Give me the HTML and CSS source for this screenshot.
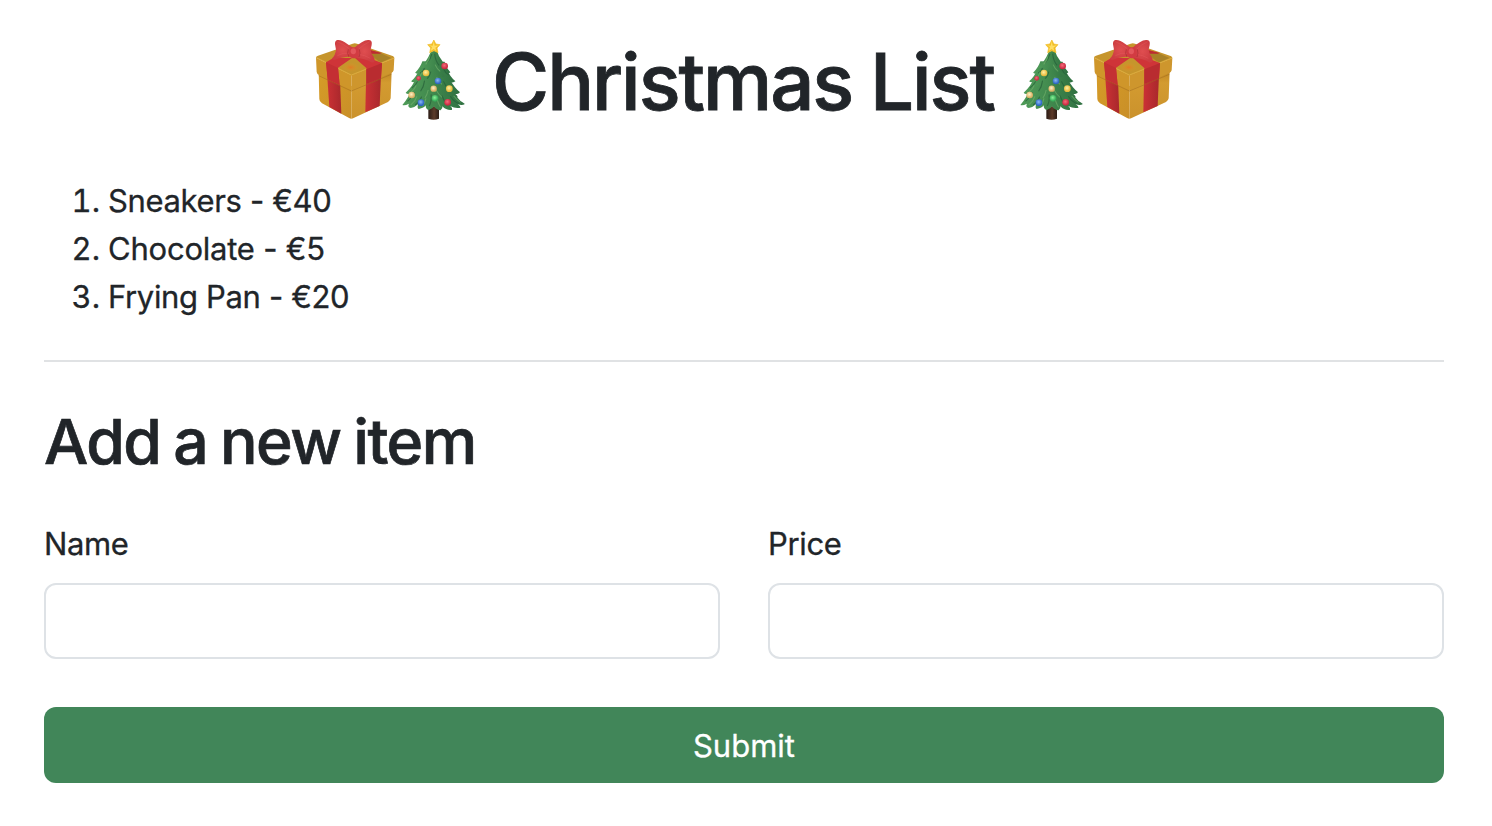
FILE: index.html
```html
<!DOCTYPE html>
<html lang="en">
<head>
<meta charset="utf-8">
<title>Christmas List</title>
<link rel="stylesheet" href="styles.css">
</head>
<body>
<svg class="defs" aria-hidden="true">
  <defs>
    <linearGradient id="gold-left" x1="0" y1="0" x2="1" y2="1"><stop offset="0" stop-color="#d69c27"/><stop offset="1" stop-color="#c98f28"/></linearGradient>
    <linearGradient id="gold-right" x1="0" y1="0" x2="0" y2="1"><stop offset="0" stop-color="#c08622"/><stop offset=".25" stop-color="#d39b30"/><stop offset="1" stop-color="#cb922c"/></linearGradient>
    <linearGradient id="ribbon" x1="0" y1="0" x2="1" y2="0"><stop offset="0" stop-color="#cb3135"/><stop offset="1" stop-color="#a9282c"/></linearGradient>
    <radialGradient id="bow"><stop offset="0" stop-color="#df4e50"/><stop offset="1" stop-color="#cd3d41"/></radialGradient>
    <radialGradient id="glow"><stop offset="0" stop-color="#e87522" stop-opacity=".8"/><stop offset="1" stop-color="#d99b29" stop-opacity="0"/></radialGradient>
    <linearGradient id="needles" x1="0" y1="0" x2="1" y2="0"><stop offset="0" stop-color="#4f9b58"/><stop offset=".5" stop-color="#40884d"/><stop offset="1" stop-color="#2f7041"/></linearGradient>
    <linearGradient id="trunk"><stop offset="0" stop-color="#2b1b15"/><stop offset=".55" stop-color="#5d3a29"/><stop offset="1" stop-color="#2d1c15"/></linearGradient>
    <radialGradient id="ball-red" cx=".45" cy=".4"><stop offset="0" stop-color="#f46b7a"/><stop offset="1" stop-color="#cb2b42"/></radialGradient>
    <radialGradient id="ball-blue" cx=".45" cy=".4"><stop offset="0" stop-color="#8db8f5"/><stop offset="1" stop-color="#2d67c3"/></radialGradient>
    <radialGradient id="ball-gold" cx=".45" cy=".4"><stop offset="0" stop-color="#fff1a4"/><stop offset="1" stop-color="#e9bb3d"/></radialGradient>
    <radialGradient id="ball-cream" cx=".45" cy=".4"><stop offset="0" stop-color="#fff2c5"/><stop offset="1" stop-color="#d9b064"/></radialGradient>
    <radialGradient id="ball-green" cx=".45" cy=".4"><stop offset="0" stop-color="#8df19a"/><stop offset="1" stop-color="#37ac58"/></radialGradient>
  </defs>
  <symbol id="gift" viewBox="0 0 270 270">
    <path d="M26 108 L124 153 L124 251 Q121 251 116 248 L36 205 Q28 200 28 192Z" fill="url(#gold-left)"/>
    <path d="M124 153 L245 108 L242 190 Q241 197 234 201 L131 249 Q127 251 124 251Z" fill="url(#gold-right)"/>
    <path d="M51 113 L90 134 L94 236 L58 216Z" fill="url(#ribbon)"/>
    <path d="M168 137 L213 119 L209 213 L166 232Z" fill="url(#ribbon)"/>
    <path d="M18 68 Q18 64 24 62 L128 26 Q134 24 141 26 L248 63 Q254 65 253 70 L124 122Z" fill="#c6952c"/>
    <path d="M18 68 L124 121 L124 166 L28 121 Q21 118 20 111Z" fill="#cf962a"/>
    <path d="M124 121 L253 69 L251 106 Q250 112 242 115 L124 166Z" fill="#ce962d"/>
    <path d="M20 68 L124 120 L252 69" fill="none" stroke="#deb040" stroke-width="2.500"/>
    <path d="M26 122 L124 168 L244 118" fill="none" stroke="#a0691d" stroke-width="3" opacity=".5"/>
    <path d="M48 82 L70 69 L126 69 L84 98 L89 150 L53 133Z" fill="#cf3438"/>
    <path d="M48 82 L84 99 L89 150 L53 133Z" fill="#c42f33"/>
    <path d="M134 68 L169 99 L169 147 L213 129 L216 84 L158 62Z" fill="#cf3438"/>
    <path d="M169 103 L216 84 L213 129 L169 147Z" fill="#b92c30"/>
    <path d="M178 44 L216 54 L188 67Z" fill="#bd2b32"/>
    <path d="M182 56 Q196 74 214 82 L244 69 L216 56Z" fill="#a88127"/>
    <ellipse cx="122" cy="97" rx="24" ry="14" fill="url(#glow)"/>
    <path d="M82 15 Q94 13 112 27 L130 39 L129 64 Q105 65 87 70 Q66 79 66 70 Q76 61 78 44 L75 28 Q74 17 82 15Z" fill="url(#bow)"/>
    <path d="M133 39 Q157 16 174 15 Q188 14 185 30 L182 43 Q184 60 193 69 Q197 84 184 82 Q164 70 139 69Z" fill="url(#bow)"/>
    <path d="M82 20 Q98 25 119 42 M82 62 Q99 52 118 55 M179 20 Q159 29 147 42 M181 70 Q163 60 147 58" fill="none" stroke="#eb6267" stroke-width="3" opacity=".3"/>
    <path d="M115 43q-5 12 2 23 M148 43q4 12-1 23" fill="none" stroke="#a7292f" stroke-width="3" opacity=".6"/>
    <rect x="117" y="37" width="29" height="33" rx="13" fill="#d23b42"/>
    <ellipse cx="130" cy="49" rx="8" ry="9" fill="#e3565b"/>
  </symbol>
  <symbol id="tree" viewBox="0 0 240 270">
    <path d="M100 214h32v37q-16 6-32 0Z" fill="url(#trunk)"/>
    <g transform="translate(-10.500 0) scale(1.09 1)">
      <path d="M55 164 Q49 184 30 210 Q36 213 48 206 Q43 216 53 219 Q65 217 73 208 Q70 220 75 222 Q90 219 94 211 Q94 224 103 225 Q114 221 117 214 Q123 225 135 226 Q142 220 140 214 Q151 227 166 225 Q169 219 161 213 Q177 222 190 218 Q190 213 182 208 Q195 212 202 207 Q197 203 190 198 Q178 186 171 169Z" fill="url(#needles)"/>
      <path d="M67 130 Q59 154 39 173 Q43 180 56 175 Q50 188 58 190 Q72 185 78 177 Q75 193 86 196 Q98 191 101 180 Q105 195 116 196 Q124 190 123 180 Q136 197 151 194 Q156 189 148 181 Q165 192 181 188 Q184 183 175 177 Q187 177 188 171 Q174 160 160 133Z" fill="url(#needles)"/>
      <path d="M76 103 Q70 124 54 139 Q60 145 72 139 Q69 153 77 154 Q89 148 91 142 Q92 157 101 158 Q110 151 109 146 Q120 161 133 159 Q137 153 132 146 Q147 157 164 153 Q166 147 158 142 Q168 145 176 139 Q160 124 154 105Z" fill="url(#needles)"/>
      <path d="M85 79 Q79 99 65 113 Q72 120 84 112 Q81 125 91 126 Q102 119 102 113 Q105 130 118 128 Q122 121 119 114 Q132 131 146 125 Q147 119 138 112 Q156 119 162 112 Q151 99 146 80Z" fill="url(#needles)"/>
      <path d="M108 51 Q97 80 79 97 Q85 103 94 97 Q94 106 102 104 Q109 100 110 94 Q116 108 126 106 Q129 99 125 94 Q139 105 153 99 Q142 83 138 75 Q129 62 126 50 Q117 46 108 51Z" fill="url(#needles)"/>
      <path d="M111 57q-3 16-13 27 M119 56q1 20 12 35 M91 99q-3 11-12 15 M108 110q-3 15-10 21 M144 103q5 12 14 17 M72 139q-5 11-16 20 M91 137q-2 19-11 32 M143 139q6 17 18 28 M64 172q-6 15-20 27 M83 185q-5 15-18 25 M109 178q2 20-5 35 M139 182q5 18 16 30 M162 184q8 16 24 22" fill="none" stroke="#235b37" stroke-width="3" opacity=".65"/>
      <path d="M105 65q-2 13-11 23 M84 111q-3 15-14 25 M120 89q5 13 14 20 M124 126q6 14 15 22 M68 151q-4 12-14 20 M101 165q-3 15-9 24 M122 164q8 15 17 23 M70 184q-5 16-17 26 M95 190q-3 14-10 24 M126 195q4 13 9 22 M171 182q9 13 19 20" fill="none" stroke="#71b16b" stroke-width="3" opacity=".65"/>
    </g>
    <path d="M116.500 15 L122.500 27 L135 29 L126 39 L129 53 L116.500 47 L104 53 L107 39 L98 29 L110.500 27Z" fill="#f1bd25" stroke="#f1bd25" stroke-width="2" stroke-linejoin="round"/>
    <path d="M116.500 18 L119 32 L132 31 L121 38 L124 48 L116 42 L107 48 L111 36 L101 31 L113 32Z" fill="#ffdf65"/>
    <circle cx="149" cy="93" r="10" fill="url(#ball-red)"/>
    <circle cx="71" cy="130" r="7" fill="url(#ball-red)"/>
    <circle cx="93" cy="114" r="10" fill="url(#ball-gold)"/>
    <circle cx="129" cy="138" r="10" fill="url(#ball-blue)"/>
    <circle cx="116" cy="161" r="9.500" fill="url(#ball-cream)"/>
    <circle cx="163" cy="161" r="10" fill="url(#ball-gold)"/>
    <circle cx="50" cy="180" r="10" fill="url(#ball-cream)"/>
    <circle cx="120" cy="190" r="10" fill="url(#ball-green)"/>
    <circle cx="78" cy="203" r="10" fill="url(#ball-blue)"/>
    <circle cx="158" cy="202" r="10" fill="url(#ball-red)"/>
  </symbol>
</svg>
<main class="container">
  <h1 class="title">
    <svg class="gift"><use href="#gift"/></svg>
    <svg class="tree"><use href="#tree"/></svg>
    <span class="title-text">Christmas List</span>
    <svg class="tree"><use href="#tree"/></svg>
    <svg class="gift"><use href="#gift"/></svg>
  </h1>
  <ol class="items">
    <li class="item"><span class="number">1.</span><span class="sneakers">Sneakers - €40</span></li>
    <li class="item"><span class="number">2.</span><span class="chocolate">Chocolate - €5</span></li>
    <li class="item"><span class="number">3.</span><span class="pan">Frying Pan - €20</span></li>
  </ol>
  <hr class="divider">
  <h2 class="subtitle">Add a new item</h2>
  <form class="form">
    <div class="field"><label class="label" for="name">Name</label><input class="input" id="name" type="text"></div>
    <div class="field"><label class="label" for="price">Price</label><input class="input" id="price" type="text"></div>
    <button class="submit" type="button">Submit</button>
  </form>
</main>
</body>
</html>
```

FILE: styles.css
```css
* { box-sizing: border-box; }

body {
  margin: 0;
  background: #fff;
  color: #212529;
  font-family: Inter, "Liberation Sans", sans-serif;
  font-size: 31px;
  line-height: 48px;
  -webkit-text-stroke: 0.3px currentColor;
}

.defs { position: absolute; width: 0; height: 0; }

.container { padding: 35px 48px 0 44px; }

.title {
  display: flex;
  justify-content: center;
  height: 93px;
  margin: 0;
  font-size: 78px;
  font-weight: 500;
  line-height: 94px;
  letter-spacing: -2.1px;
  word-spacing: -1px;
  -webkit-text-stroke: 0.8px currentColor;
}

.title-text { width: 538px; padding-right: 2px; text-align: center; white-space: nowrap; }
.gift { width: 90px; height: 90px; flex: none; }
.tree { width: 80px; height: 90px; flex: none; }
.gift:first-child { margin-right: -5px; }
.gift:last-child { margin-left: -5px; }

.items {
  margin: 0;
  padding: 49px 0 0;
  list-style: none;
  letter-spacing: -0.35px;
}

.item { display: flex; height: 48px; }
.number { width: 56px; margin-right: 8px; text-align: right; font-variant-numeric: tabular-nums; letter-spacing: 0; }
.chocolate { letter-spacing: -0.22px; }

.divider {
  height: 2px;
  margin: 39px 0 0;
  border: 0;
  background: #e0e2e4;
}

.subtitle {
  margin: 41px 0 0;
  font-size: 62.5px;
  font-weight: 500;
  line-height: 77px;
  letter-spacing: -1.55px;
  word-spacing: -2.3px;
  -webkit-text-stroke: 0.7px currentColor;
}

.form {
  display: grid;
  grid-template-columns: 1fr 1fr;
  gap: 48px;
  margin-top: 40px;
}

.label { display: block; height: 63px; letter-spacing: -0.35px; }

.input {
  display: block;
  width: 100%;
  height: 76px;
  padding: 12px 24px;
  border: 2px solid #dee2e6;
  border-radius: 12px;
  background: #fff;
  font: inherit;
}

.submit {
  grid-column: span 2;
  height: 76px;
  padding: 2px 0 0;
  border: 0;
  border-radius: 12px;
  background: #418659;
  color: #fff;
  font: inherit;
  letter-spacing: 0;
}
```
